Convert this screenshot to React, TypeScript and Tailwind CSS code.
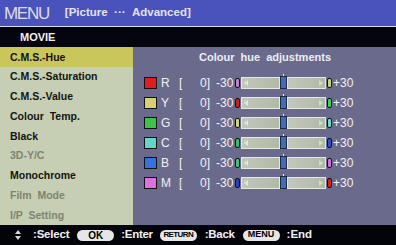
import React from 'react';

interface HueRow {
  key: string;
  swatch: string;
  low: string;
  high: string;
}

const rows: HueRow[] = [
  { key: 'R', swatch: 'bg-[#e01c24]', low: 'bg-[#c080c8]', high: 'bg-[#c4d860]' },
  { key: 'Y', swatch: 'bg-[#d8cf72]', low: 'bg-[#c41f24]', high: 'bg-[#3fd062]' },
  { key: 'G', swatch: 'bg-[#3fc24a]', low: 'bg-[#cad872]', high: 'bg-[#62dec6]' },
  { key: 'C', swatch: 'bg-[#62d8c4]', low: 'bg-[#2fc062]', high: 'bg-[#3050d0]' },
  { key: 'B', swatch: 'bg-[#3572e0]', low: 'bg-[#3fc07e]', high: 'bg-[#d070d8]' },
  { key: 'M', swatch: 'bg-[#e070e2]', low: 'bg-[#2442c2]', high: 'bg-[#d42222]' },
];

const menuItems = [
  { label: 'C.M.S.-Hue', active: true },
  { label: 'C.M.S.-Saturation' },
  { label: 'C.M.S.-Value' },
  { label: 'Colour  Temp.' },
  { label: 'Black' },
  { label: '3D-Y/C', disabled: true },
  { label: 'Monochrome' },
  { label: 'Film  Mode', disabled: true },
  { label: 'I/P  Setting', disabled: true },
];

const Slider: React.FC = () => (
  <div className="relative flex h-[12px] w-[85px] items-stretch">
    <div className="flex flex-1 items-center border border-[#e6e8e2] bg-gradient-to-r from-[#c2c8ba] to-[#b0b9a8] pl-[2px]">
      <svg width="4" height="6" viewBox="0 0 4 6">
        <path d="M4 0 L0 3 L4 6 Z" fill="#e2e6dc" />
      </svg>
    </div>
    <div className="-mt-[1px] h-[13px] w-[7px] border border-[#1c2a48] bg-[#3f6db8]" />
    <div className="flex flex-1 items-center justify-end border border-[#e6e8e2] bg-gradient-to-r from-[#c2c8ba] to-[#b0b9a8] pr-[2px]">
      <svg width="4" height="6" viewBox="0 0 4 6">
        <path d="M0 0 L4 3 L0 6 Z" fill="#cde2ba" />
      </svg>
    </div>
    <div className="absolute left-[42px] top-[-3px] h-[2px] w-[1px] bg-[#f0f0f0]" />
  </div>
);

const Pill: React.FC<{ label: string; className?: string }> = ({ label, className }) => (
  <span
    className={`flex h-[11px] w-[37px] items-center justify-center rounded-full bg-[#e6e6e6] font-bold text-black ${className ?? ''}`}
  >
    {label}
  </span>
);

export default function App() {
  return (
    <div className="flex h-[245px] w-[396px] flex-col overflow-hidden bg-black font-['Liberation_Sans',Arial,sans-serif]">
      {/* header */}
      <div className="flex h-[27px] items-center border-b border-[#d8dcef] bg-[#4a52bb]">
        <span className="ml-[4px] text-[17px] leading-none tracking-[-1.3px] text-[#dcdcea]">MENU</span>
        <span className="ml-[16px] text-[11.5px] font-bold leading-none text-[#e2e4f2]">
          [Picture &nbsp;··· &nbsp;Advanced]
        </span>
      </div>

      <div className="flex h-[20px] items-center bg-[#05050f] pl-[20px]">
        <span className="text-[11px] font-bold text-[#f0f0f0]">MOVIE</span>
      </div>

      {/* main */}
      <div className="flex h-[178px]">
        <div className="flex w-[133px] flex-col bg-[#c6cfb3]">
          {menuItems.map((item) => (
            <div
              key={item.label}
              className={`flex flex-1 items-center whitespace-pre pl-[10px] pt-[1px] text-[10.5px] font-bold ${
                item.active ? 'bg-[#c9c75c] text-[#121212]' : item.disabled ? 'text-[#7d8471]' : 'text-[#141414]'
              }`}
            >
              {item.label}
            </div>
          ))}
        </div>

        <div className="flex flex-1 flex-col bg-[#6a6a8c]">
          <div className="flex h-[20px] items-center pl-[66px] text-[11px] font-bold text-[#eceef2] whitespace-pre">
            Colour  hue  adjustments
          </div>
          <div className="mt-[6px] flex flex-col">
            {rows.map((r) => (
              <div key={r.key} className="flex h-[20px] items-center text-[12px] text-[#f2f2f2]">
                <span className={`ml-[11px] h-[12px] w-[13px] border border-[#111] ${r.swatch}`} />
                <span className="ml-[4px] w-[18px]">{r.key}</span>
                <span className="flex w-[31px] justify-between">
                  <span>[</span>
                  <span>0]</span>
                </span>
                <span className="ml-[6px] w-[18px]">-30</span>
                <span className={`ml-[1px] mr-[1px] h-[10px] w-[5px] rounded-[2px] border border-[#111] ${r.low}`} />
                <Slider />
                <span className={`ml-[1px] h-[10px] w-[5px] rounded-[2px] border border-[#111] ${r.high}`} />
                <span className="ml-[1px]">+30</span>
              </div>
            ))}
          </div>
        </div>
      </div>

      {/* footer */}
      <div className="flex h-[20px] items-center bg-[#03030a] pl-[15px] text-[11.5px] font-bold text-[#f2f2f2]">
        <svg width="6" height="10" viewBox="0 0 6 10">
          <path d="M3 0 L6 4 L0 4 Z" fill="#d8d8d8" />
          <path d="M0 6 L6 6 L3 10 Z" fill="#d8d8d8" />
        </svg>
        <span className="ml-[12px] tracking-[-0.2px]">:Select</span>
        <Pill label="OK" className="ml-[8px] text-[10px]" />
        <span className="ml-[7px] tracking-[-0.3px]">:Enter</span>
        <Pill label="RETURN" className="ml-[7px] text-[8px] tracking-[-0.6px]" />
        <span className="ml-[8px] tracking-[-0.3px]">:Back</span>
        <Pill label="MENU" className="ml-[8px] w-[36px] text-[9px]" />
        <span className="ml-[7px]">:End</span>
      </div>
    </div>
  );
}
